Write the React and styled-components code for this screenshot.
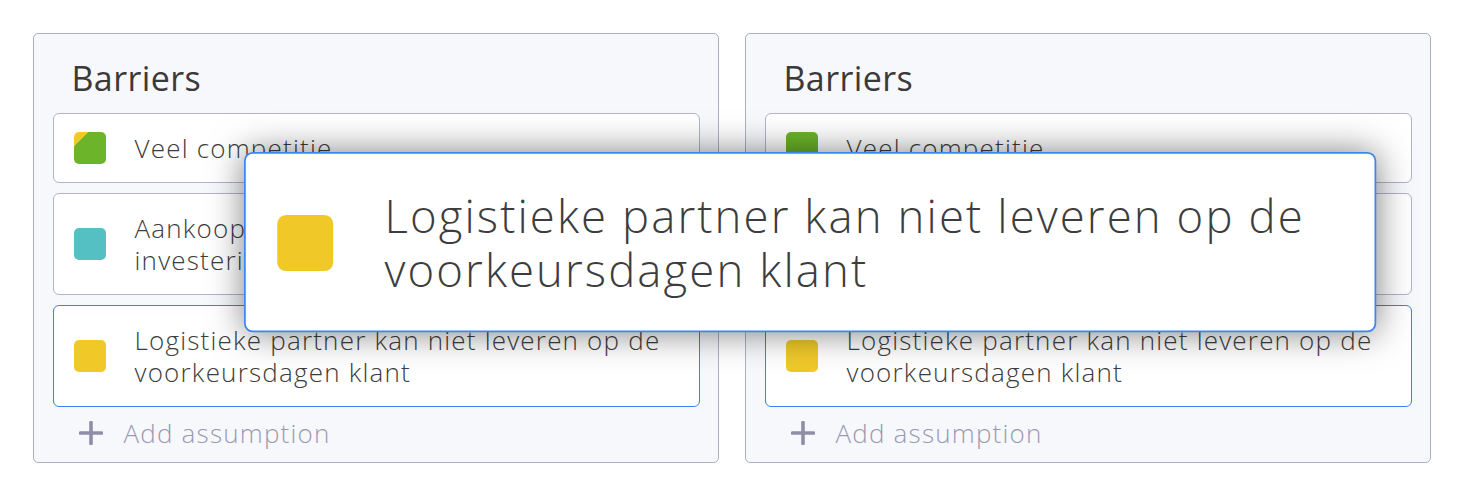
import React from "react";
import styled, { createGlobalStyle } from "styled-components";

const GlobalStyle = createGlobalStyle`
  body {
    margin: 0;
    background: #ffffff;
    font-family: "Open Sans", "Lato", sans-serif;
    font-weight: 300;
    color: #3d3d3d;
  }
`;

const Board = styled.div`
  position: relative;
  display: flex;
  gap: 26px;
  padding: 33px;
`;

const Panel = styled.div`
  width: 686px;
  box-sizing: border-box;
  border: 1.5px solid #aeb0c8;
  border-radius: 5px;
  background: #f7f8fc;
  padding: 0 18.5px 3px;
`;

const Title = styled.h2`
  margin: 23px 0 14px 19px;
  font-size: 34px;
  line-height: 42px;
  font-weight: 400;
  letter-spacing: 0.4px;
  color: #3a3a3a;
`;

const CardList = styled.div`
  display: flex;
  flex-direction: column;
  gap: 10px;
`;

const Card = styled.div`
  display: flex;
  align-items: center;
  gap: 29px;
  width: 647px;
  box-sizing: border-box;
  padding: 18px 20px;
  background: #ffffff;
  border: 1.5px solid ${(p) => (p.$active ? "#3b7ff5" : "#b4b4c8")};
  border-radius: 6px;
  font-size: 26px;
  line-height: 32px;
  letter-spacing: 1.2px;
  color: #3d3d3d;
`;

const DragCard = styled(Card)`
  position: absolute;
  left: 244px;
  top: 152px;
  z-index: 10;
  transform: scale(1.75);
  transform-origin: top left;
  padding: 19.5px 20px 19.5px 18.3px;
  line-height: 31px;
  border-width: 1.8px;
  border-radius: 5px;
  border-color: #3d84f6;
  box-shadow: 0 0 20px rgba(0, 0, 0, 0.5);
`;

const Swatch = styled.span`
  flex: 0 0 32px;
  width: 32px;
  height: 32px;
  border-radius: 5px;
  background: ${(p) => p.$color};
`;

const AddRow = styled.div`
  display: flex;
  align-items: center;
  gap: 21px;
  height: 52px;
  padding-left: 26px;
  font-size: 26px;
  letter-spacing: 1.2px;
  color: #9a9ab3;
`;

const PlusIcon = () => (
  <svg width="24" height="24" viewBox="0 0 24 24">
    <path
      d="M12 1.5v21M1.5 12h21"
      stroke="#8e8ea9"
      strokeWidth="3.6"
      strokeLinecap="round"
    />
  </svg>
);

const COLORS = {
  yellow: "#f0c929",
  teal: "#55c0c4",
  green: "#6cb52a",
  mixed: "linear-gradient(135deg, #f0c929 0 22%, #6cb52a 22%)",
};

const logistiek = "Logistieke partner kan niet leveren op de voorkeursdagen klant";
const aankoop = "Aankoop nieuwe machines vraagt grote investering";

const panels = [
  [
    { color: COLORS.mixed, text: "Veel competitie" },
    { color: COLORS.teal, text: aankoop },
    { color: COLORS.yellow, text: logistiek, active: true },
  ],
  [
    { color: COLORS.green, text: "Veel competitie" },
    { color: COLORS.teal, text: aankoop },
    { color: COLORS.yellow, text: logistiek, active: true },
  ],
];

export default function App() {
  return (
    <>
      <GlobalStyle />
      <Board>
        {panels.map((cards, i) => (
          <Panel key={i}>
            <Title>Barriers</Title>
            <CardList>
              {cards.map((c, j) => (
                <Card key={j} $active={c.active}>
                  <Swatch $color={c.color} />
                  <span>{c.text}</span>
                </Card>
              ))}
            </CardList>
            <AddRow>
              <PlusIcon />
              Add assumption
            </AddRow>
          </Panel>
        ))}
        <DragCard $active>
          <Swatch $color={COLORS.yellow} />
          <span>{logistiek}</span>
        </DragCard>
      </Board>
    </>
  );
}
